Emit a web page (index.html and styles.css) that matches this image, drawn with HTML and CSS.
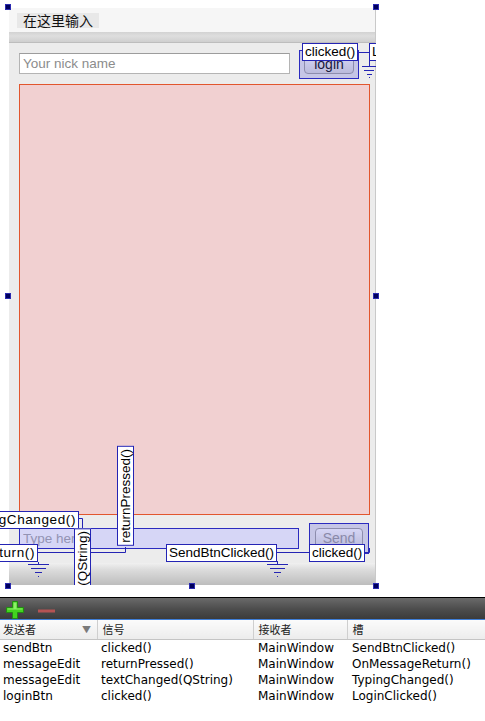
FILE: index.html
```html
<!DOCTYPE html>
<html lang="zh-CN">
<head>
  <meta charset="UTF-8" />
  <meta name="viewport" content="width=device-width, initial-scale=1.0" />
  <title>MainWindow — 信号/槽编辑器</title>
  <link rel="stylesheet" href="styles.css">
</head>
<body>
  <div class="canvas">
    <div class="form">
      <div class="menubar"><span class="menu-entry">在这里输入</span></div>
      <div class="toolbar"></div>
      <div class="central">
        <div class="login-row">
          <input class="nick" type="text" placeholder="Your nick name" />
          <div class="hl login-box"><button class="btn">login</button></div>
        </div>
        <div class="chat-view"></div>
        <div class="send-row">
          <div class="hl message-box"><input class="message" type="text" placeholder="Type here" /></div>
          <div class="hl send-box"><button class="btn btn-off">Send</button></div>
        </div>
      </div>
      <div class="statusbar"></div>
    </div>

    <!-- connection overlay -->
    <div class="links">
      <svg class="wires" width="376" height="586" viewBox="0 0 376 586">
        <g fill="none" stroke="#2424b4" stroke-width="1">
          <path d="M359 52.5 H369" />
          <path d="M369.5 60 V66.5 M362 66.5 H376 M364 70.5 H374 M367 74.5 H372" />
          <path d="M79 518.5 H82.5 V528" />
          <path d="M125.5 547 V552.5 H38" />
          <path d="M38.5 562 V564.5 M28 564.5 H49 M31 568.5 H46 M35 572.5 H42" />
          <path d="M277 552.5 H309" />
          <path d="M277.5 561 V564.5 M267 564.5 H288 M270 568.5 H285 M274 572.5 H281" />
          <path d="M365 552.5 H369.5 V548" />
        </g>
        <g fill="#2424b4">
          <rect x="38" y="576" width="1" height="1" />
          <rect x="277" y="576" width="1" height="1" />
          <rect x="369" y="77" width="1" height="1" />
        </g>
      </svg>
      <span class="tag tag-login-sig">clicked()</span>
      <span class="tag tag-login-slot">LoginClicked()</span>
      <span class="tag tag-wide tag-typing-slot">TypingChanged()</span>
      <span class="tag tag-wide tag-return-slot">OnMessageReturn()</span>
      <span class="tag tag-vert tag-text-sig">textChanged(QString)</span>
      <span class="tag tag-vert tag-return-sig">returnPressed()</span>
      <span class="tag tag-send-slot">SendBtnClicked()</span>
      <span class="tag tag-send-sig">clicked()</span>
    </div>

    <span class="handle h-tl"></span>
    <span class="handle h-tr"></span>
    <span class="handle h-ml"></span>
    <span class="handle h-mr"></span>
    <span class="handle h-bl"></span>
    <span class="handle h-bm"></span>
    <span class="handle h-br"></span>
  </div>

  <div class="editor">
    <div class="editor-tools">
      <svg class="tool-add" width="18" height="18" viewBox="0 0 18 18">
        <path d="M6.5 0.5 H11.5 V6.5 H17.5 V11.5 H11.5 V17.5 H6.5 V11.5 H0.5 V6.5 H6.5 Z" fill="#42d41f" stroke="#228c12" stroke-width="1" />
        <path d="M7.5 1.5 H10.5 V7.5 H16.5 V8.5 H10.5 H7.5 H1.5 V7.5 H7.5 Z" fill="#8ef06a" />
      </svg>
      <svg class="tool-remove" width="18" height="4" viewBox="0 0 18 4">
        <rect x="0" y="0.5" width="17" height="3" fill="#b55353" />
      </svg>
    </div>
    <table class="connections">
      <thead>
        <tr>
          <th class="c-sender">发送者<span class="sort">▼</span></th>
          <th class="c-signal">信号</th>
          <th class="c-receiver">接收者</th>
          <th class="c-slot">槽</th>
        </tr>
      </thead>
      <tbody>
        <tr><td>sendBtn</td><td>clicked()</td><td>MainWindow</td><td>SendBtnClicked()</td></tr>
        <tr><td>messageEdit</td><td>returnPressed()</td><td>MainWindow</td><td>OnMessageReturn()</td></tr>
        <tr><td>messageEdit</td><td>textChanged(QString)</td><td>MainWindow</td><td>TypingChanged()</td></tr>
        <tr><td>loginBtn</td><td>clicked()</td><td>MainWindow</td><td>LoginClicked()</td></tr>
      </tbody>
    </table>
  </div>
</body>
</html>
```

FILE: styles.css
```css
body {
  margin: 0;
  width: 485px;
  background: #fff;
  font-family: "Liberation Sans", Arial, sans-serif;
}

/* ---- designer canvas ---- */

.canvas {
  position: relative;
  height: 597px;
  overflow: hidden;
}

.form {
  margin: 8px 0 0 9px;
  width: 367px;
  height: 577px;
  box-sizing: border-box;
  border-right: 1px solid #c9c9c9;
  display: flex;
  flex-direction: column;
}

.menubar {
  height: 24px;
  box-sizing: border-box;
  padding: 4px 0 0 8px;
  background: #f6f6f6;
}

.menu-entry {
  display: inline-block;
  height: 15px;
  line-height: 15px;
  padding: 0 6px;
  background: #e8e8e8;
  font-family: "Noto Sans CJK SC", sans-serif;
  font-size: 14px;
  color: #111;
}

.toolbar {
  height: 11px;
  background: linear-gradient(#d2d2d2, #dedede 40%, #cfcfcf);
  border-bottom: 1px solid #bdbdbd;
  box-sizing: border-box;
}

.central {
  height: 520px;
  box-sizing: border-box;
  padding: 7px 6px 0 10px;
  background: #ececec;
}

.statusbar {
  height: 22px;
  background: linear-gradient(#f0f0f0, #dcdcdc 30%, #bdbdbd);
}

.login-row,
.send-row {
  display: flex;
  align-items: flex-start;
}

.login-row { height: 29px; }

.nick {
  margin: 3px 9px 0 0;
  width: 271px;
  height: 21px;
  box-sizing: border-box;
  padding: 0 3px;
  border: 1px solid #b4b4b4;
  border-top-color: #9c9c9c;
  background: #fff;
  font-family: inherit;
  font-size: 13.5px;
  outline: none;
}

.nick::placeholder { color: #8c8c8c; }

.chat-view {
  margin-top: 5px;
  width: 351px;
  height: 431px;
  box-sizing: border-box;
  background: #f1d0d1;
  border: 1px solid #e2562e;
}

.send-row {
  margin-top: 8px;
  height: 31px;
}

/* selected-widget highlight */
.hl {
  position: relative;
  box-sizing: border-box;
  border: 1px solid #2b2bbf;
}

.hl::after {
  content: "";
  position: absolute;
  inset: 0;
  background: rgba(0, 0, 200, 0.16);
}

.login-box {
  width: 60px;
  height: 29px;
  padding: 4px 4px 0 4px;
}

.message-box {
  margin: 5px 10px 0 0;
  width: 280px;
  height: 21px;
}

.send-box {
  width: 60px;
  height: 31px;
  padding: 4px 5px 0 5px;
}

.message {
  display: block;
  width: 100%;
  height: 100%;
  box-sizing: border-box;
  border: none;
  padding: 0 3px;
  background: #fff;
  font-family: inherit;
  font-size: 13.5px;
  outline: none;
}

.message::placeholder { color: #b0b0b0; }

.btn {
  display: block;
  width: 100%;
  height: 19px;
  padding: 0;
  border: 1px solid #a9a9a9;
  border-radius: 4px;
  background: linear-gradient(#ffffff, #ececec 55%, #e0e0e0);
  font-family: inherit;
  font-size: 14px;
  line-height: 15px;
  color: #222;
}

.send-box .btn { height: 21px; }

.btn-off { color: #a4a4a4; }

/* ---- connections ---- */

.links {
  position: absolute;
  top: 0;
  left: 0;
  width: 376px;
  height: 585px;
  overflow: hidden;
}

.wires {
  position: absolute;
  top: 0;
  left: 0;
}

.tag {
  position: absolute;
  box-sizing: border-box;
  height: 18px;
  padding: 0 2px;
  line-height: 16px;
  border: 1px solid #2424b4;
  background: #fff;
  font-size: 13.5px;
  color: #000;
  white-space: nowrap;
}

.tag-wide { letter-spacing: 0.6px; }

.tag-vert {
  height: auto;
  width: 17px;
  padding: 2px 0;
  writing-mode: vertical-rl;
  transform: rotate(180deg);
  line-height: 15px;
}

.tag-login-sig  { left: 302px; top: 43px; }
.tag-login-slot { left: 369px; top: 43px; }
.tag-typing-slot { right: 297px; top: 511px; }
.tag-return-slot { right: 338px; top: 544px; }
.tag-text-sig   { left: 74px; top: 528px; }
.tag-return-sig { left: 117px; top: 446px; }
.tag-send-slot  { left: 166px; top: 544px; }
.tag-send-sig   { left: 309px; top: 544px; }

.handle {
  position: absolute;
  width: 6px;
  height: 6px;
  box-sizing: border-box;
  background: #00005c;
  border: 1px solid #2a2ab0;
}

.h-tl { left: 5px;   top: 4px; }
.h-tr { left: 373px; top: 4px; }
.h-ml { left: 5px;   top: 293px; }
.h-mr { left: 373px; top: 293px; }
.h-bl { left: 5px;   top: 583px; }
.h-bm { left: 189px; top: 583px; }
.h-br { left: 373px; top: 583px; }

/* ---- signal/slot editor ---- */

.editor {
  border-top: 1px solid #000;
}

.editor-tools {
  height: 22px;
  box-sizing: border-box;
  padding: 3px 0 0 6px;
  display: flex;
  align-items: flex-start;
  gap: 14px;
  background: linear-gradient(#6a6a6a, #4e4e4e 50%, #3b3b3b);
  border-bottom: 1px solid #3f7fd9;
}

.tool-remove { margin-top: 8px; }

.connections {
  width: 485px;
  border-collapse: collapse;
  table-layout: fixed;
  font-family: "DejaVu Sans", sans-serif;
  font-size: 12px;
  color: #000;
}

.connections th {
  height: 19px;
  box-sizing: border-box;
  padding: 0 0 0 5px;
  text-align: left;
  font-family: "Noto Sans CJK SC", sans-serif;
  font-size: 11px;
  font-weight: normal;
  color: #222;
  background: linear-gradient(#fbfbfb, #ececec);
  border-bottom: 1px solid #c4c4c4;
  border-left: 1px solid #cfcfcf;
}

.connections th.c-sender {
  position: relative;
  padding-left: 3px;
  border-left: none;
}

.sort {
  position: absolute;
  left: 82px;
  top: 3px;
  font-size: 9px;
  color: #7a7a7a;
}

.c-sender   { width: 97px; }
.c-signal   { width: 156px; }
.c-receiver { width: 94px; }

.connections td {
  height: 16px;
  padding: 0 0 0 5px;
  line-height: 16px;
  white-space: nowrap;
  overflow: hidden;
}

.connections td:first-child { padding-left: 3px; }
.connections td:nth-child(2) { padding-left: 4px; }
```
